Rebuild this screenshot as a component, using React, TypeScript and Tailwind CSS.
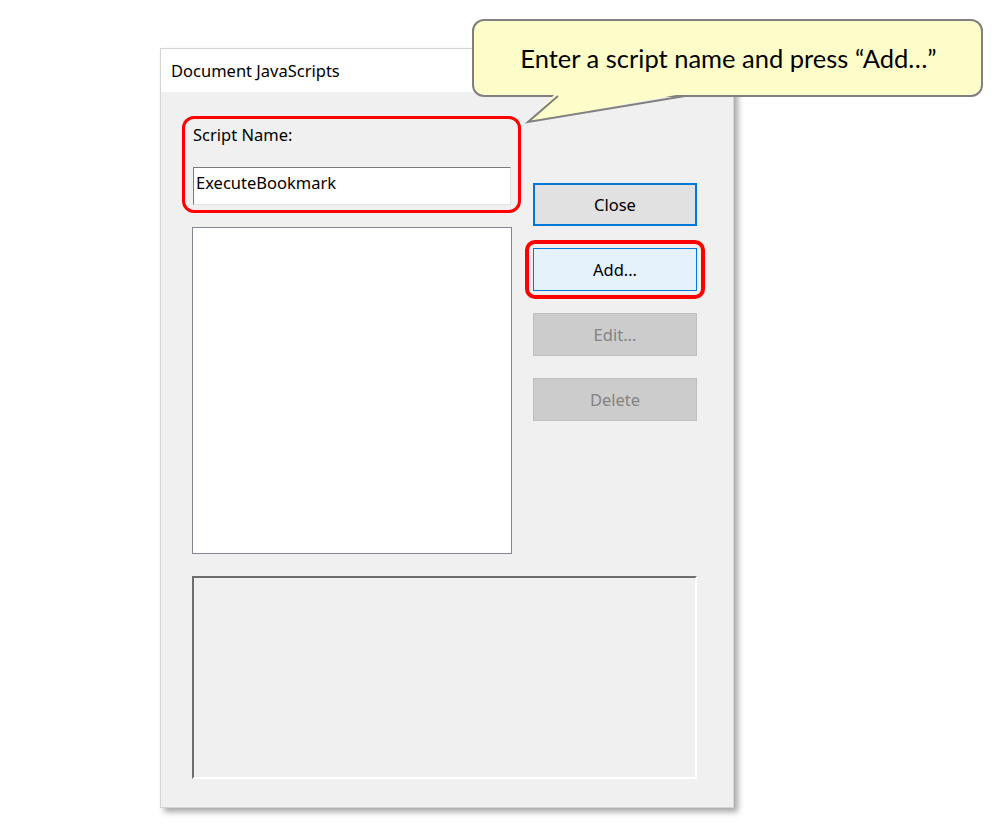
import React from "react";

const uiFont = { fontFamily: '"Noto Sans", "Open Sans", sans-serif' };

const DialogButton = ({ label, variant }: { label: string; variant: "focus" | "hot" | "disabled" }) => {
  const styles = {
    focus: "bg-[#e1e1e1] border-2 border-[#0078d7] text-black",
    hot: "bg-[#e5f1fb] border border-[#0078d7] text-black",
    disabled: "bg-[#cccccc] border border-[#bfbfbf] text-[#838383]",
  }[variant];
  return (
    <div className={`h-[43px] w-[164px] flex items-center justify-center pt-[2px] text-[16.5px] ${styles}`}>
      {label}
    </div>
  );
};

const Callout = () => (
  <div className="absolute left-[472px] top-[19px] w-[511px] h-[78px]">
    <div className="w-full h-full rounded-[12px] border-2 border-[#808080] bg-[#fdfdca] flex items-center justify-center">
      <span
        className="text-[25.5px] text-black pl-[2px]"
        style={{ fontFamily: '"Lato", "Liberation Sans", sans-serif' }}
      >
        Enter a script name and press “Add…”
      </span>
    </div>
    <svg className="absolute left-0 top-0 overflow-visible" width="511" height="110">
      <polygon points="84,74 56,103 215,74" fill="#fdfdca" />
      <polyline points="86,77 56,103 213,77" fill="none" stroke="#808080" strokeWidth="2" strokeLinejoin="miter" />
    </svg>
  </div>
);

export default function App() {
  return (
    <div className="relative w-[997px] h-[834px] bg-white overflow-hidden" style={uiFont}>
      <div className="pl-[160px] pt-[48px]">
        <div className="w-[574px] border border-[#d4d4d4] bg-[#f0f0f0] shadow-[4px_4px_6px_rgba(0,0,0,0.35)]">
          <div className="h-[43px] bg-white flex items-center pl-[10px] pt-[2px] text-[16.5px] text-black">
            Document JavaScripts
          </div>

          <div className="pl-[21px] pt-[24px] pb-[28px]">
            <div className="flex">
              <div className="w-[339px]">
                <div className="rounded-[12px] border-[3px] border-[#ff0000] pl-[8px] pr-[7px] pt-[5px] pb-[5px]">
                  <div className="leading-[22px] text-[16.5px] text-black">Script Name:</div>
                  <div className="mt-[21px] h-[38px] bg-white border border-t-[#7a7a7a] border-l-[#7a7a7a] border-b-[#e3e3e3] border-r-[#e3e3e3] pl-[2px] pt-[4px] leading-[22px] text-[16.5px] text-black">
                    ExecuteBookmark
                  </div>
                </div>
                <div className="ml-[10px] mt-[14px] w-[320px] h-[327px] bg-white border border-[#828790]" />
              </div>

              <div className="ml-[12px] mt-[67px] flex flex-col gap-[22px]">
                <DialogButton label="Close" variant="focus" />
                <div className="-m-[8px] p-[4px] border-4 border-[#ff0000] rounded-[10px]">
                  <DialogButton label="Add..." variant="hot" />
                </div>
                <DialogButton label="Edit..." variant="disabled" />
                <DialogButton label="Delete" variant="disabled" />
              </div>
            </div>

            <div className="ml-[10px] mt-[22px] w-[505px] h-[203px] border-2 border-t-[#6d6d6d] border-l-[#6d6d6d] border-b-white border-r-white bg-[#f0f0f0]" />
          </div>
        </div>
      </div>

      <Callout />
    </div>
  );
}
